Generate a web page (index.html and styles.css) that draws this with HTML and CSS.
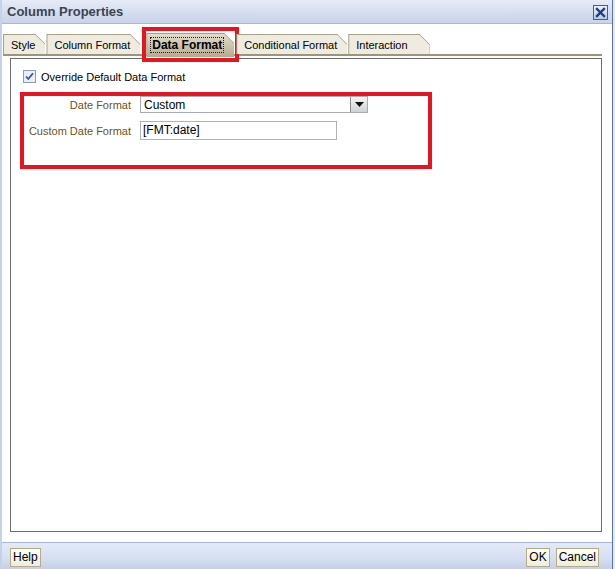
FILE: index.html
```html
<!DOCTYPE html>
<html lang="en">
<head>
  <meta charset="UTF-8">
  <title>Column Properties</title>
  <link rel="stylesheet" href="styles.css">
</head>
<body>

<div class="dialog">
  <div class="titlebar">
    <span class="title">Column Properties</span>
    <span class="close-btn">
      <svg width="15" height="15" viewBox="0 0 15 15">
        <defs>
          <linearGradient id="cg" x1="0" y1="0" x2="0" y2="1">
            <stop offset="0" stop-color="#eef3fc"/>
            <stop offset="1" stop-color="#b7c8e8"/>
          </linearGradient>
        </defs>
        <rect x="0.5" y="0.5" width="14" height="14" fill="url(#cg)" stroke="#3d5f9e"/>
        <path d="M4 4 L11 11 M11 4 L4 11" stroke="#1f3c7c" stroke-width="2.4" stroke-linecap="square"/>
      </svg>
    </span>
  </div>

  <div class="content">
    <div class="tabs">
      <div class="tab"><span>Style</span></div>
      <div class="tab"><span>Column Format</span></div>
      <div class="tab-mark">
        <div class="tab active"><span class="focus">Data Format</span></div>
      </div>
      <div class="tab"><span>Conditional Format</span></div>
      <div class="tab"><span>Interaction</span></div>
    </div>

    <div class="panel">
      <label class="check-row">
        <svg class="checkbox" width="13" height="13" viewBox="0 0 13 13">
          <rect x="0.5" y="0.5" width="12" height="12" fill="#eceef2" stroke="#8e9cb6"/>
          <path d="M3 6.5 L5.3 9 L10 3.3" fill="none" stroke="#3550a0" stroke-width="1.8"/>
        </svg>
        Override Default Data Format
      </label>

      <div class="format-box">
        <div class="form-row">
          <span class="form-label">Date Format</span>
          <div class="select">
            <span class="select-value">Custom</span>
            <span class="select-arrow">
              <svg width="9" height="5" viewBox="0 0 9 5"><path d="M0 0 H9 L4.5 5 Z" fill="#111"/></svg>
            </span>
          </div>
        </div>
        <div class="form-row">
          <span class="form-label">Custom Date Format</span>
          <div class="text-input">[FMT:date]</div>
        </div>
      </div>
    </div>
  </div>

  <div class="footer">
    <button class="btn">Help</button>
    <div class="footer-right">
      <button class="btn">OK</button>
      <button class="btn">Cancel</button>
    </div>
  </div>
</div>

</body>
</html>
```

FILE: styles.css
```css
/* Page */
body {
  margin: 0;
  background: #e6e8ec;
  font-family: "Liberation Sans", Arial, sans-serif;
  font-size: 11px;
  color: #000;
}

/* Dialog frame */
.dialog {
  box-sizing: border-box;
  width: 613px;
  height: 569px;
  background: #fff;
  border-left: 2px solid #c6d2ea;
  border-right: 1px solid #5876ae;
  display: flex;
  flex-direction: column;
}

/* Title bar */
.titlebar {
  height: 23px;
  border-bottom: 1px solid #a9b7d6;
  background: linear-gradient(#e6ebf7, #d3dcef 60%, #c9d3ea);
  display: flex;
  align-items: center;
  justify-content: space-between;
  padding: 0 4px 0 5px;
}
.title {
  font-size: 13px;
  font-weight: bold;
  color: #3c4350;
}
.close-btn {
  display: flex;
  margin-top: 1px;
}

/* Body */
.content {
  flex: 1;
  display: flex;
  flex-direction: column;
  padding: 9px 10px 10px 1px;
}

/* Tabs */
.tabs {
  display: flex;
  align-items: flex-end;
  gap: 1px;
  border-bottom: 2px solid #9d957a;
  height: 21px;
}
.tab {
  position: relative;
  height: 20px;
  padding: 0 10px 0 8px;
  display: flex;
  align-items: center;
  background: #a8a18a;
  clip-path: polygon(0 0, calc(100% - 10px) 0, 100% 10px, 100% 100%, 0 100%);
}
.tab::before {
  content: "";
  position: absolute;
  top: 1px;
  left: 1px;
  right: 0;
  bottom: 0;
  background: #efebe1;
  clip-path: polygon(0 0, calc(100% - 10px) 0, 100% 10px, 100% 100%, 0 100%);
}
.tab:last-child {
  padding-right: 22px;
}
.tab span {
  position: relative;
  font-size: 11px;
  margin-top: 1px;
}
.tab-mark {
  position: relative;
  margin: 0 1px 0 5px;
}
.tab-mark::after {
  content: "";
  position: absolute;
  top: -6px;
  left: -4px;
  right: -5px;
  bottom: -8px;
  border: 4px solid #e8141f;
}
.tab.active {
  height: 24px;
  margin-bottom: -3px;
  padding: 0 11px 0 5px;
}
.tab.active::before {
  background: linear-gradient(#e2dccc, #c9c0a8 60%, #b4aa8e);
}
.tab.active .focus {
  font-weight: bold;
  font-size: 12px;
  outline: 1px dotted #222;
  padding: 0 1px;
  margin-top: 0;
}

/* Panel */
.panel {
  flex: 1;
  margin: 2px 0 0 7px;
  border: 1px solid #6b6b6b;
  padding: 11px 0 0 12px;
}
.check-row {
  display: flex;
  align-items: center;
  gap: 5px;
  height: 13px;
}
.checkbox {
  flex: none;
}

/* Highlighted format block */
.format-box {
  box-sizing: border-box;
  width: 412px;
  height: 77px;
  margin: 9px 0 0 -3px;
  border: 4px solid #e8141f;
  display: flex;
  flex-direction: column;
  gap: 8px;
}
.form-row {
  display: flex;
  align-items: center;
}
.form-label {
  width: 107px;
  text-align: right;
  margin-right: 9px;
  color: #6a5226;
}
.select {
  box-sizing: border-box;
  width: 228px;
  height: 17px;
  border: 1px solid #a6acb4;
  display: flex;
  align-items: center;
  justify-content: space-between;
}
.select-value {
  padding-left: 3px;
  font-size: 12px;
}
.select-arrow {
  box-sizing: border-box;
  width: 17px;
  height: 15px;
  border-left: 1px solid #8d8d8d;
  background: linear-gradient(#f4f4f4, #d2d2d2);
  display: flex;
  align-items: center;
  justify-content: center;
}
.text-input {
  box-sizing: border-box;
  width: 197px;
  height: 19px;
  border: 1px solid #b2b2b2;
  padding-left: 2px;
  font-size: 12px;
  line-height: 17px;
}

/* Footer */
.footer {
  height: 26px;
  border-top: 1px solid #a7b7da;
  background: linear-gradient(#e4eaf8, #d6def2 60%, #c6cfe8);
  display: flex;
  align-items: center;
  justify-content: space-between;
  padding: 0 13px 0 8px;
}
.footer-right {
  display: flex;
  gap: 6px;
}
.btn {
  height: 19px;
  padding: 0 2px;
  border: 1px solid #b4ac86;
  border-radius: 0;
  background: linear-gradient(#fffffa, #eeecdc);
  font-family: "Liberation Sans", Arial, sans-serif;
  font-size: 12px;
  color: #000;
  margin-top: 2px;
}
```
